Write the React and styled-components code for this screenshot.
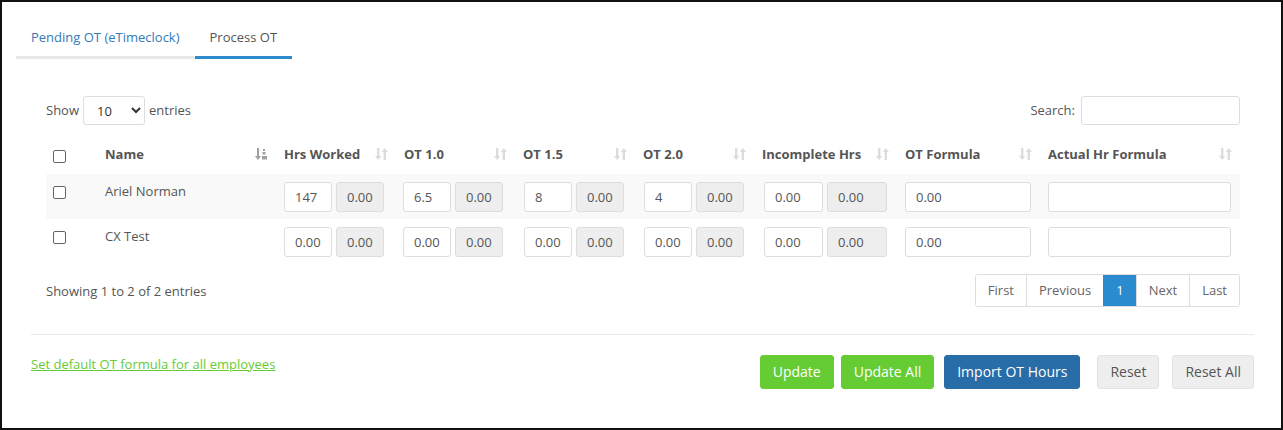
import React from 'react';
import styled, { createGlobalStyle } from 'styled-components';

const GlobalStyle = createGlobalStyle`
  html, body {
    margin: 0;
    padding: 0;
    background: #fff;
  }
  body {
    font-family: "Open Sans", "Liberation Sans", Arial, sans-serif;
    font-size: 13px;
    color: #555;
  }
  * {
    box-sizing: border-box;
  }
`;

const columns = [
    { key: 'cb', width: 51 },
    { key: 'name', label: 'Name', width: 179, sorted: true },
    { key: 'hrs', label: 'Hrs Worked', width: 120 },
    { key: 'ot10', label: 'OT 1.0', width: 119 },
    { key: 'ot15', label: 'OT 1.5', width: 120 },
    { key: 'ot20', label: 'OT 2.0', width: 119 },
    { key: 'inc', label: 'Incomplete Hrs', width: 143 },
    { key: 'formula', label: 'OT Formula', width: 143 },
    { key: 'actual', label: 'Actual Hr Formula', width: 200 },
];

const rows = [
    { id: 1, name: 'Ariel Norman', hrs: '147', ot10: '6.5', ot15: '8', ot20: '4', inc: '0.00', formula: '0.00' },
    { id: 2, name: 'CX Test', hrs: '0.00', ot10: '0.00', ot15: '0.00', ot20: '0.00', inc: '0.00', formula: '0.00' },
];

// pairs of inputs per column: [editable width, readonly width, shift]
const pairs = [
    { key: 'hrs', w: [48, 48], shift: 0 },
    { key: 'ot10', w: [48, 48], shift: -1 },
    { key: 'ot15', w: [48, 48], shift: 1 },
    { key: 'ot20', w: [48, 48], shift: 1 },
    { key: 'inc', w: [59, 60], shift: 2 },
];

const SortIcon = ({ active }) =>
    active ? (
        <svg width="13" height="14" viewBox="0 0 13 14">
            <g fill="#a0a0a0">
                <rect x="2" y="1" width="2" height="9" />
                <path d="M0 9 L6 9 L3 13 Z" />
                <rect x="8" y="2" width="2" height="2" />
                <rect x="7.5" y="5" width="3" height="2.5" />
                <rect x="7" y="9" width="5" height="3.5" />
            </g>
        </svg>
    ) : (
        <svg width="13" height="14" viewBox="0 0 13 14">
            <g fill="#dcdcdc">
                <rect x="2" y="1" width="2.4" height="9" />
                <path d="M0 9 L6.4 9 L3.2 13 Z" />
                <rect x="8.6" y="4" width="2.4" height="9" />
                <path d="M6.6 5 L13 5 L9.8 1 Z" />
            </g>
        </svg>
    );

const App = () => {
    return (
        <Frame>
            <GlobalStyle />
            <Tabs>
                <Tab>Pending OT (eTimeclock)</Tab>
                <Tab active>Process OT</Tab>
            </Tabs>
            <Panel>
                <TableWrap>
                    <TopBar>
                        <Label>
                            Show
                            <Select defaultValue="10">
                                <option>10</option>
                                <option>25</option>
                                <option>50</option>
                                <option>100</option>
                            </Select>
                            entries
                        </Label>
                        <Label>
                            Search:
                            <SearchInput type="text" />
                        </Label>
                    </TopBar>

                    <Table>
                        <colgroup>
                            {columns.map(c => (
                                <col key={c.key} style={{ width: c.width }} />
                            ))}
                        </colgroup>
                        <thead>
                            <tr>
                                {columns.map(c =>
                                    c.key === 'cb' ? (
                                        <Th key={c.key} first>
                                            <Check type="checkbox" />
                                        </Th>
                                    ) : (
                                        <Th key={c.key}>
                                            <HeadInner>
                                                <span>{c.label}</span>
                                                <SortIcon active={c.sorted} />
                                            </HeadInner>
                                        </Th>
                                    )
                                )}
                            </tr>
                        </thead>
                        <tbody>
                            {rows.map((r, i) => (
                                <Tr key={r.id} striped={i % 2 === 0}>
                                    <Td first>
                                        <Check type="checkbox" />
                                    </Td>
                                    <Td>
                                        <NameText>{r.name}</NameText>
                                    </Td>
                                    {pairs.map(p => (
                                        <Td key={p.key}>
                                            <Pair shift={p.shift}>
                                                <Field w={p.w[0]} defaultValue={r[p.key]} />
                                                <Field w={p.w[1]} disabled value="0.00" readOnly />
                                            </Pair>
                                        </Td>
                                    ))}
                                    <Td>
                                        <Field w={126} defaultValue={r.formula} />
                                    </Td>
                                    <Td>
                                        <Field w={183} defaultValue="" />
                                    </Td>
                                </Tr>
                            ))}
                        </tbody>
                    </Table>

                    <InfoBar>
                        <span>Showing 1 to 2 of 2 entries</span>
                        <Pager>
                            <PageBtn>First</PageBtn>
                            <PageBtn>Previous</PageBtn>
                            <PageBtn active>1</PageBtn>
                            <PageBtn>Next</PageBtn>
                            <PageBtn>Last</PageBtn>
                        </Pager>
                    </InfoBar>
                </TableWrap>

                <Divider />

                <Footer>
                    <DefaultLink href="#">Set default OT formula for all employees</DefaultLink>
                    <Actions>
                        <Button variant="green">Update</Button>
                        <Button variant="green" gap={7}>Update All</Button>
                        <Button variant="blue" gap={10}>Import OT Hours</Button>
                        <Button variant="light" gap={17}>Reset</Button>
                        <Button variant="light" gap={13}>Reset All</Button>
                    </Actions>
                </Footer>
            </Panel>
        </Frame>
    );
};

export default App;

const Frame = styled.div`
    width: 1283px;
    height: 430px;
    border: 2px solid #111;
    padding: 16px 0 0 14px;
    overflow: hidden;
`;

const Tabs = styled.div`
    display: flex;
`;

const Tab = styled.div`
    padding: 9px 15px;
    line-height: 20px;
    font-size: 13px;
    color: ${p => (p.active ? '#555' : '#337ab7')};
    border-bottom: 3px solid ${p => (p.active ? '#2a8ccf' : '#e8e8e8')};
    cursor: pointer;
`;

const Panel = styled.div`
    width: 1223px;
    margin: 37px 0 0 15px;
`;

const TableWrap = styled.div`
    padding: 0 14px 0 15px;
`;

const TopBar = styled.div`
    display: flex;
    justify-content: space-between;
    align-items: center;
    height: 29px;
    line-height: 18px;
`;

const Label = styled.label`
    display: flex;
    align-items: center;
    gap: 4px;
    color: #555;
    margin-top: -2px;
`;

const Select = styled.select`
    width: 62px;
    height: 29px;
    margin-top: 2px;
    border: 1px solid #ddd;
    border-radius: 3px;
    background: #fff;
    padding: 0 6px 0 9px;
    font-family: inherit;
    font-size: 13px;
    color: #333;
`;

const SearchInput = styled.input`
    width: 159px;
    height: 29px;
    margin: 2px 0 0 2px;
    border: 1px solid #ddd;
    border-radius: 3px;
    font-family: inherit;
`;

const Table = styled.table`
    width: 100%;
    table-layout: fixed;
    border-collapse: collapse;
    margin-top: 9px;
`;

const Th = styled.th`
    height: 40px;
    padding: 0 8px 0 ${p => (p.first ? '7px' : '8px')};
    text-align: left;
    font-weight: 700;
    color: #555;
    vertical-align: middle;
`;

const HeadInner = styled.div`
    display: flex;
    justify-content: space-between;
    align-items: center;
    line-height: 18px;
`;

const Tr = styled.tr`
    background: ${p => (p.striped ? '#f9f9f9' : '#fff')};
`;

const Td = styled.td`
    height: 45px;
    padding: 8px 8px 7px ${p => (p.first ? '7px' : '8px')};
    vertical-align: top;
`;

const NameText = styled.div`
    line-height: 19px;
    color: #555;
`;

const Check = styled.input`
    appearance: none;
    width: 13px;
    height: 13px;
    margin: 4px 0 0 0;
    border: 1px solid #666;
    border-radius: 2px;
    background: #fff;
    display: block;
`;

const Pair = styled.div`
    display: flex;
    gap: 4px;
    margin-left: ${p => p.shift}px;
`;

const Field = styled.input`
    width: ${p => p.w}px;
    height: 30px;
    padding: 0 10px;
    border: 1px solid #ddd;
    border-radius: 3px;
    font-family: inherit;
    font-size: 13px;
    color: #555;
    background: ${p => (p.disabled ? '#eee' : '#fff')};
    -webkit-text-fill-color: #555;
    opacity: 1;
`;

const InfoBar = styled.div`
    display: flex;
    justify-content: space-between;
    align-items: center;
    margin-top: 10px;
    color: #555;
    line-height: 18px;
`;

const Pager = styled.div`
    display: flex;
    border: 1px solid #ddd;
    border-radius: 3px;
    overflow: hidden;
`;

const PageBtn = styled.div`
    padding: 6px ${p => (p.active ? '12px' : '12px')};
    line-height: 19px;
    color: ${p => (p.active ? '#fff' : '#666')};
    background: ${p => (p.active ? '#2a8ccf' : '#fff')};
    border-left: 1px solid ${p => (p.active ? '#2a8ccf' : '#ddd')};
    &:first-child {
        border-left: none;
    }
`;

const Divider = styled.div`
    height: 1px;
    background: #e8e8e8;
    margin-top: 27px;
`;

const Footer = styled.div`
    display: flex;
    justify-content: space-between;
    align-items: flex-start;
    margin-top: 20px;
`;

const DefaultLink = styled.a`
    color: #66cc33;
    text-decoration: underline;
    line-height: 18px;
    font-size: 13px;
`;

const Actions = styled.div`
    display: flex;
`;

const variants = {
    green: { bg: '#66cc33', border: '#66cc33', color: '#fff' },
    blue: { bg: '#286ca8', border: '#286ca8', color: '#fff' },
    light: { bg: '#eee', border: '#e2e2e2', color: '#555' },
};

const Button = styled.button`
    margin-left: ${p => p.gap || 0}px;
    padding: 6px 12px;
    height: 34px;
    line-height: 20px;
    font-family: inherit;
    font-size: 14px;
    border-radius: 3px;
    border: 1px solid ${p => variants[p.variant].border};
    background: ${p => variants[p.variant].bg};
    color: ${p => variants[p.variant].color};
    cursor: pointer;
`;
